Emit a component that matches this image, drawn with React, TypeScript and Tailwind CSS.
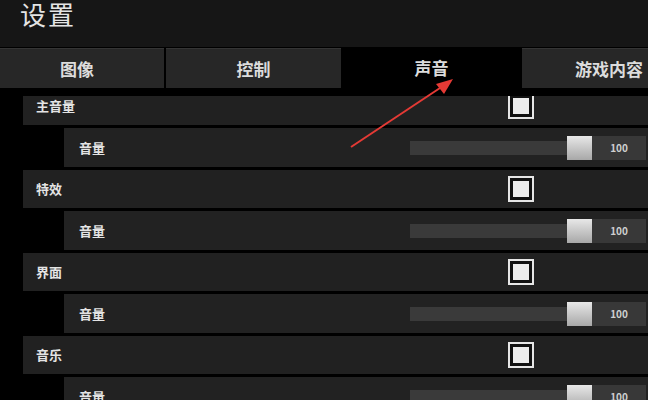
const font = { fontFamily: '"Noto Sans CJK SC", "Noto Sans", sans-serif' }

const groups = ["主音量", "特效", "界面", "音乐"]

function Checkbox() {
  return (
    <div className="w-[26px] h-[26px] border-2 border-[#e6e6e6] bg-[#111] p-[3px]">
      <div className="w-full h-full bg-[#ececec]" />
    </div>
  )
}

function Slider({ value }: { value: number }) {
  return (
    <div className="flex items-center">
      <div className="w-[157px] h-[14px] bg-[#3a3a3a]" />
      <div className="w-[25px] h-[24px] bg-gradient-to-b from-[#e8e8e8] to-[#a8a8a8]" />
      <div className="w-[54px] h-[24px] bg-[#383838] flex items-center justify-center text-[10px] text-[#cfcfcf]">
        {value}
      </div>
    </div>
  )
}

export default function App() {
  return (
    <main className="relative w-[648px] h-[400px] overflow-hidden bg-black text-[#e4e4e4]" style={font}>
      <header className="h-[47px] bg-[#161616] px-[20px]">
        <h1 className="text-[26px] leading-[28px] tracking-[2px]">设置</h1>
      </header>

      <nav className="mt-[1px] h-[40px] flex gap-[2px] text-[17px] font-bold text-[#dcdcdc]">
        <div className="w-[164px] bg-[#272727] border-t border-[#353535] flex items-center justify-center pr-[10px]">图像</div>
        <div className="w-[175px] bg-[#272727] border-t border-[#353535] flex items-center justify-center">控制</div>
        <div className="w-[177px] bg-black flex items-center justify-center">声音</div>
        <div className="flex-1 bg-[#272727] border-t border-[#353535] flex items-center justify-center pl-[48px] whitespace-nowrap">游戏内容</div>
      </nav>

      <section className="mt-[8px] h-[304px] overflow-hidden">
        <div className="-mt-[9px] pl-[23px] flex flex-col gap-[3px] text-[13px] font-bold">
          {groups.map((g) => (
            <div key={g} className="flex flex-col gap-[3px]">
              <div className="h-[38px] bg-[#212121] flex items-center">
                <div className="w-[485px] pl-[13px]">{g}</div>
                <Checkbox />
              </div>
              <div className="ml-[41px] h-[39px] bg-[#222] flex items-center">
                <div className="w-[346px] pl-[15px]">音量</div>
                <Slider value={100} />
              </div>
            </div>
          ))}
        </div>
      </section>

      <svg className="absolute left-0 top-0 pointer-events-none" width="648" height="400">
        <line x1="351" y1="147" x2="440" y2="88" stroke="#e53a35" strokeWidth="2" />
        <polygon points="453,79 436,84 444,94" fill="#e53a35" />
      </svg>
    </main>
  )
}
